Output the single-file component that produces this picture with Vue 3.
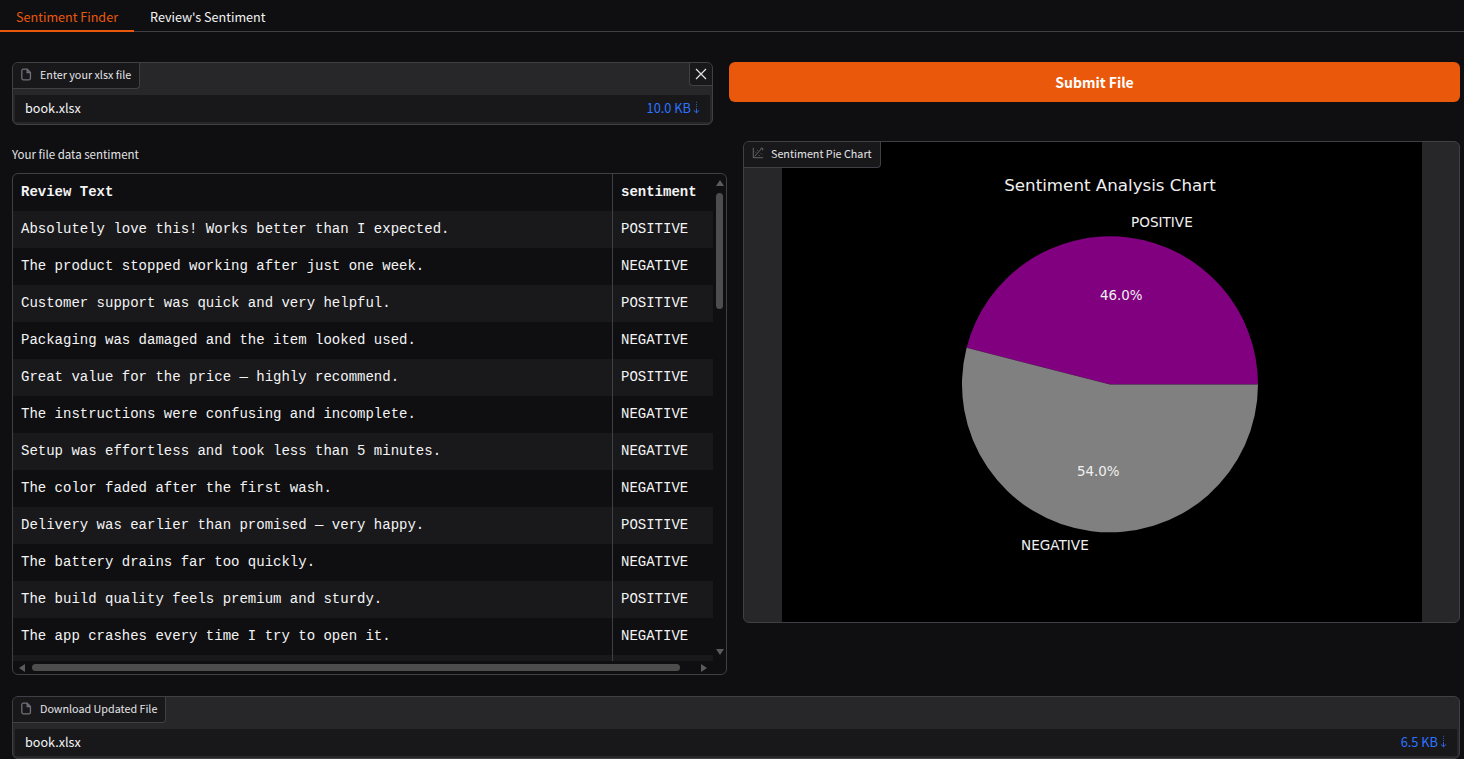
<template>
  <div class="page">
    <nav class="tabs">
      <button class="tab tab--active" type="button">Sentiment Finder</button>
      <button class="tab" type="button">Review's Sentiment</button>
    </nav>

    <main class="main">
      <section class="row row--top">
        <div class="block file-block">
          <div class="block-head">
            <span class="block-label">
              <svg class="label-icon" viewBox="0 0 12 14" aria-hidden="true">
                <path d="M2.5 1.2h4.2l3.6 3.6v6.4a1.6 1.6 0 0 1-1.6 1.6H2.5a1.6 1.6 0 0 1-1.6-1.6V2.8a1.6 1.6 0 0 1 1.6-1.6z M6.7 1.2v3.6h3.6" />
              </svg>
              Enter your xlsx file
            </span>
            <button class="clear-btn" type="button" aria-label="Clear">
              <svg viewBox="0 0 12 12" aria-hidden="true"><path d="M1 1l10 10M11 1L1 11" /></svg>
            </button>
          </div>
          <div class="file-row">
            <span class="file-name">book.xlsx</span>
            <span class="file-size">10.0 KB
              <svg class="dl-icon" viewBox="0 0 8 14" aria-hidden="true"><path d="M4 .5v1M4 3v1M4 5.5v1M4 8v5M1 10.4L4 13l3-2.6" /></svg>
            </span>
          </div>
        </div>
        <button class="submit" type="button">Submit File</button>
      </section>

      <section class="row row--mid">
        <div class="table-col">
          <div class="table-title">Your file data sentiment</div>
          <div class="table-wrap">
            <div class="table">
              <div class="tr tr--head">
                <div class="td td--text">Review Text</div>
                <div class="td td--sent">sentiment</div>
              </div>
              <div v-for="(r, i) in rows" :key="i" class="tr" :class="{ 'tr--alt': i % 2 === 0 }">
                <div class="td td--text">{{ r[0] }}</div>
                <div class="td td--sent">{{ r[1] }}</div>
              </div>
            </div>
            <div class="vbar">
              <span class="arrow arrow--up"></span>
              <span class="vthumb"></span>
              <span class="arrow arrow--down"></span>
            </div>
            <div class="hbar">
              <span class="arrow arrow--left"></span>
              <span class="hthumb"></span>
              <span class="arrow arrow--right"></span>
            </div>
          </div>
        </div>

        <div class="block chart-block">
          <span class="block-label block-label--over">
            <svg class="label-icon label-icon--chart" viewBox="0 0 14 14" aria-hidden="true">
              <path d="M1.5 1v11.5H13" />
              <path d="M3 11l8-9" />
              <path d="M3.5 5.5l1 1m1.5-3l1 1M8 9.5l1 1m1.5-3l1 1M10 1.5h2.5V4" />
            </svg>
            Sentiment Pie Chart
          </span>
          <svg class="chart" viewBox="0 0 640 480" width="640" height="480" role="img">
            <rect width="640" height="480" fill="#000" />
            <path d="M328 242.5L476 242.5A148 148 0 0 0 184.6 205.7Z" fill="#800080" />
            <path d="M328 242.5L184.6 205.7A148 148 0 1 0 476 242.5Z" fill="#808080" />
            <text x="328" y="49" text-anchor="middle" class="chart-title">Sentiment Analysis Chart</text>
            <text x="349" y="85" class="chart-label">POSITIVE</text>
            <text x="239" y="408" class="chart-label">NEGATIVE</text>
            <text x="318" y="158" class="chart-pct">46.0%</text>
            <text x="295" y="334" class="chart-pct">54.0%</text>
          </svg>
        </div>
      </section>

      <section class="block dl-block">
        <div class="block-head">
          <span class="block-label">
            <svg class="label-icon" viewBox="0 0 12 14" aria-hidden="true">
              <path d="M2.5 1.2h4.2l3.6 3.6v6.4a1.6 1.6 0 0 1-1.6 1.6H2.5a1.6 1.6 0 0 1-1.6-1.6V2.8a1.6 1.6 0 0 1 1.6-1.6z M6.7 1.2v3.6h3.6" />
            </svg>
            Download Updated File
          </span>
        </div>
        <div class="file-row">
          <span class="file-name">book.xlsx</span>
          <span class="file-size">6.5 KB
            <svg class="dl-icon" viewBox="0 0 8 14" aria-hidden="true"><path d="M4 .5v1M4 3v1M4 5.5v1M4 8v5M1 10.4L4 13l3-2.6" /></svg>
          </span>
        </div>
      </section>
    </main>
  </div>
</template>

<script setup>
const rows = [
  ['Absolutely love this! Works better than I expected.', 'POSITIVE'],
  ['The product stopped working after just one week.', 'NEGATIVE'],
  ['Customer support was quick and very helpful.', 'POSITIVE'],
  ['Packaging was damaged and the item looked used.', 'NEGATIVE'],
  ['Great value for the price — highly recommend.', 'POSITIVE'],
  ['The instructions were confusing and incomplete.', 'NEGATIVE'],
  ['Setup was effortless and took less than 5 minutes.', 'NEGATIVE'],
  ['The color faded after the first wash.', 'NEGATIVE'],
  ['Delivery was earlier than promised — very happy.', 'POSITIVE'],
  ['The battery drains far too quickly.', 'NEGATIVE'],
  ['The build quality feels premium and sturdy.', 'POSITIVE'],
  ['The app crashes every time I try to open it.', 'NEGATIVE'],
  ['', '']
]
</script>

<style>
html, body { margin: 0; background: #0f0f11; }
</style>

<style scoped>
.page {
  height: 759px;
  overflow: hidden;
  background: #0f0f11;
  color: #f4f4f5;
  font-family: "Noto Sans CJK SC", "Noto Sans", sans-serif;
}
.tabs {
  display: flex;
  height: 31px;
  border-bottom: 1px solid #3f3f46;
}
.tab {
  height: 32px;
  padding: 3px 16px 0;
  border: none;
  border-bottom: 2px solid transparent;
  background: transparent;
  color: #f4f4f5;
  font: 400 12.6px "Noto Sans CJK SC", "Noto Sans", sans-serif;
  box-sizing: border-box;
}
.tab--active {
  color: #ea580c;
  border-bottom-color: #ea580c;
}
.main { padding: 30px 4px 0 12px; }
.row { display: grid; gap: 16px; }
.row--top { grid-template-columns: 701px 731px; align-items: start; }
.row--mid { grid-template-columns: 715px 717px; margin-top: 16px; align-items: start; }

.block {
  position: relative;
  box-sizing: border-box;
  border: 1px solid #3f3f46;
  border-radius: 6px;
  background: #27272a;
  overflow: hidden;
}
.file-block { height: 63px; }
.block-head {
  display: flex;
  justify-content: space-between;
  height: 32px;
}
.block-label {
  display: inline-flex;
  align-items: center;
  gap: 8px;
  box-sizing: border-box;
  height: 26px;
  padding: 0 8px 2px;
  background: #18181b;
  border-right: 1px solid #3f3f46;
  border-bottom: 1px solid #3f3f46;
  border-bottom-right-radius: 4px;
  font-size: 10.75px;
  font-weight: 400;
  color: #e4e4e7;
  white-space: nowrap;
}
.block-label--over {
  position: absolute;
  top: 0;
  left: 0;
  z-index: 1;
  gap: 7px;
  padding-bottom: 3px;
}
.label-icon {
  width: 11px;
  height: 13px;
  fill: none;
  stroke: #71717a;
  stroke-width: 1.4;
}
.label-icon--chart { width: 12px; height: 12px; stroke-width: 1; }
.clear-btn {
  display: grid;
  place-items: center;
  width: 23px;
  height: 23px;
  padding: 0;
  background: #18181b;
  border: none;
  border-left: 1px solid #3f3f46;
  border-bottom: 1px solid #3f3f46;
  border-bottom-left-radius: 4px;
}
.clear-btn svg { width: 12px; height: 12px; stroke: #e4e4e7; stroke-width: 1.2; fill: none; }
.file-row {
  display: flex;
  justify-content: space-between;
  align-items: center;
  height: 27px;
  margin: 0 2px;
  padding: 0 10px 2px;
  box-sizing: border-box;
  background: #18181b;
}
.file-name { font-size: 12.6px; font-weight: 400; color: #f4f4f5; }
.file-size {
  display: inline-flex;
  align-items: center;
  gap: 2px;
  font-size: 12.8px;
  color: #2e73ff;
}
.dl-icon { width: 7px; height: 13px; fill: none; stroke: #2e73ff; stroke-width: 1; }
.submit {
  height: 40px;
  border: none;
  border-radius: 6px;
  background: #ea580c;
  color: #fff;
  font: 700 14px "Noto Sans CJK SC", "Noto Sans", sans-serif;
}

.table-title {
  height: 32px;
  padding-top: 5px;
  box-sizing: border-box;
  font-size: 11.5px;
  line-height: 16px;
  color: #e4e4e7;
}
.table-wrap {
  position: relative;
  box-sizing: border-box;
  height: 502px;
  border: 1px solid #3f3f46;
  border-radius: 6px;
  overflow: hidden;
}
.table {
  width: 700px;
  height: 487px;
  overflow: hidden;
  font: 14px "Liberation Mono", monospace;
}
.tr { display: grid; grid-template-columns: 599px 101px; height: 37px; }
.tr--alt { background: #19191c; }
.tr--head { font-weight: 700; }
.td {
  padding: 0 8px;
  line-height: 37px;
  white-space: pre;
  color: #f4f4f5;
}
.td--sent { border-left: 1px solid #3f3f46; }

.vbar {
  position: absolute;
  top: 6px;
  right: 0;
  bottom: 19px;
  width: 13px;
  display: flex;
  flex-direction: column;
  align-items: center;
}
.vthumb {
  width: 7px;
  height: 116px;
  margin-top: 7px;
  border-radius: 4px;
  background: #4d4d4d;
}
.hbar {
  position: absolute;
  left: 6px;
  right: 19px;
  bottom: 2px;
  height: 9px;
  display: flex;
  align-items: center;
}
.hthumb {
  width: 648px;
  height: 7px;
  margin-left: 7px;
  border-radius: 4px;
  background: #4d4d4d;
}
.arrow { display: block; width: 0; height: 0; border: 0 solid transparent; }
.arrow--up { border-width: 0 4px 6px; border-bottom-color: #5b5b5b; }
.arrow--down { border-width: 6px 4px 0; border-top-color: #5b5b5b; margin-top: auto; }
.arrow--left { border-width: 4px 6px 4px 0; border-right-color: #5b5b5b; }
.arrow--right { border-width: 4px 0 4px 6px; border-left-color: #5b5b5b; margin-left: auto; }

.chart-block {
  height: 482px;
  display: flex;
  justify-content: center;
}
.chart { display: block; flex: none; }
.chart-title { fill: #f0f0f0; font: 16.7px "DejaVu Sans", sans-serif; }
.chart-label { fill: #f0f0f0; font: 13.6px "DejaVu Sans", sans-serif; }
.chart-pct { fill: #f0f0f0; font: 13.4px "DejaVu Sans", sans-serif; }

.dl-block { height: 63px; margin-top: 21px; }
</style>
